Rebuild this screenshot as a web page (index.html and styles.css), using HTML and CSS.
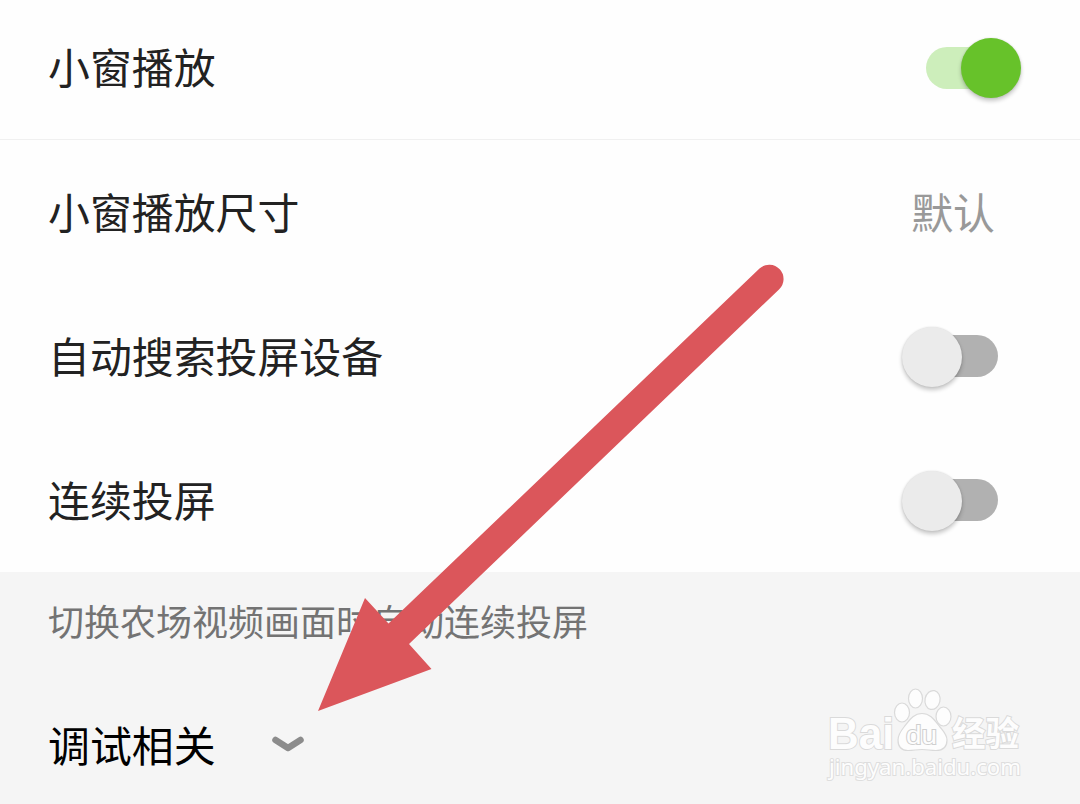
FILE: index.html
```html
<!DOCTYPE html>
<html lang="zh-CN">
<head>
<meta charset="utf-8">
<title>小窗播放</title>
<link rel="stylesheet" href="styles.css">
</head>
<body>
<main class="screen">
  <section class="group group-top">
    <div class="row"><span class="label">小窗播放</span><span class="switch switch-on"><span class="knob"></span></span></div>
  </section>
  <section class="group">
    <div class="row"><span class="label">小窗播放尺寸</span><span class="value">默认</span></div>
    <div class="row"><span class="label">自动搜索投屏设备</span><span class="switch"><span class="knob"></span></span></div>
    <div class="row"><span class="label">连续投屏</span><span class="switch"><span class="knob"></span></span></div>
  </section>
  <section class="footer">
    <p class="hint">切换农场视频画面时自动连续投屏</p>
    <div class="debug">
      <span class="debug-label">调试相关</span>
      <svg class="chevron" width="36" height="20" viewBox="0 0 36 20"><path d="M5.500 6 18 14 30.500 6"/></svg>
    </div>
  </section>
  <svg class="arrow" width="1080" height="804" viewBox="0 0 1080 804"><path d="M318 711 365 598 388.500 623.500 759.500 268.500A14.300 14.300 0 0 1 779 289.500L409 644 431.500 669Z"/></svg>
  <svg class="watermark" width="210" height="100" viewBox="820 684 210 100">
    <g class="mark">
      <text class="brand" x="828" y="749" textLength="66" lengthAdjust="spacingAndGlyphs">Bai</text>
      <ellipse cx="902" cy="712.500" rx="7.500" ry="9.500"/>
      <ellipse cx="915.500" cy="698.500" rx="7" ry="9.500"/>
      <ellipse cx="932.500" cy="700" rx="7.500" ry="9.500" transform="rotate(12 932.500 700)"/>
      <ellipse cx="943.500" cy="716.500" rx="7.500" ry="9.500"/>
      <path d="M922 713.500C931 713.500 935 721 940 727C944 732 947 735 947 740C947 747 943 750.500 936 750.500C930 750.500 928 749.500 922 749.500C916 749.500 914 750.500 908 750.500C901 750.500 898 746 898 740C898 735 900 732 904 727C909 721 913 713.500 922 713.500Z"/>
      <text class="du" x="906" y="743.500" textLength="31" lengthAdjust="spacingAndGlyphs">du</text>
      <text class="jingyan" x="952" y="746" textLength="67" lengthAdjust="spacingAndGlyphs">经验</text>
      <text class="domain" x="829" y="775" textLength="192" lengthAdjust="spacingAndGlyphs">jingyan.baidu.com</text>
    </g>
  </svg>
</main>
</body>
</html>
```
FILE: styles.css
```css
body {
  margin: 0;
  font-family: "Noto Sans CJK SC", sans-serif;
}
.screen {
  position: relative;
  width: 1080px;
  height: 804px;
  overflow: hidden;
  display: flex;
  flex-direction: column;
  background: #fefefe;
}
.group-top {
  border-bottom: 1px solid #f0f0f0;
}
.row {
  box-sizing: border-box;
  height: 144px;
  padding: 0 82px 0 48px;
  display: flex;
  align-items: center;
  justify-content: space-between;
}
.group-top .row {
  height: 139px;
  padding-bottom: 4px;
}
.label, .value, .debug-label {
  font-size: 41.9px;
  line-height: 60px;
}
.label, .value {
  padding-bottom: 2px;
}
.group-top .label {
  padding-bottom: 4px;
}
.label {
  color: #222;
}
.value {
  margin-right: 3px;
  color: #999;
}
.switch {
  display: flex;
  align-items: center;
  width: 72px;
  height: 42px;
  border-radius: 21px;
  background: #b1b1b1;
}
.knob {
  flex: none;
  width: 60px;
  height: 60px;
  margin-top: 1px;
  margin-left: -24px;
  border-radius: 50%;
  background: #ebebeb;
  box-shadow: 0 3px 4px rgba(0, 0, 0, .22), 0 0 2px rgba(0, 0, 0, .12);
}
.switch-on {
  background: #cdeebb;
}
.switch-on .knob {
  margin-top: 0;
  margin-left: 35px;
  background: #67c22a;
}
.footer {
  flex: 1;
  padding: 22px 48px 0;
  background: #f5f5f5;
}
.hint {
  margin: 0;
  font-size: 36px;
  line-height: 52px;
  color: #737373;
}
.debug {
  display: flex;
  align-items: center;
  margin-top: 68px;
}
.debug-label {
  color: #000;
}
.chevron {
  margin-left: 54px;
  fill: none;
  stroke: #8c8c8c;
  stroke-width: 6.5px;
  stroke-linecap: round;
  stroke-linejoin: round;
}
.arrow {
  position: absolute;
  inset: 0;
  fill: #db565b;
}
.watermark {
  position: absolute;
  left: 820px;
  top: 684px;
}
.mark {
  fill: #fdfdfd;
  stroke: #dadada;
  stroke-width: 1.2px;
}
.mark text {
  paint-order: stroke;
  stroke-width: 2px;
}
.brand {
  font: bold 45px "Liberation Sans", sans-serif;
}
.mark .du {
  font: 26px "Liberation Sans", sans-serif;
  stroke: #cfcfcf;
}
.jingyan {
  font: bold 34px "Noto Sans CJK SC", sans-serif;
}
.domain {
  font: 22px "Noto Sans", sans-serif;
  stroke: #dedede;
}
```
